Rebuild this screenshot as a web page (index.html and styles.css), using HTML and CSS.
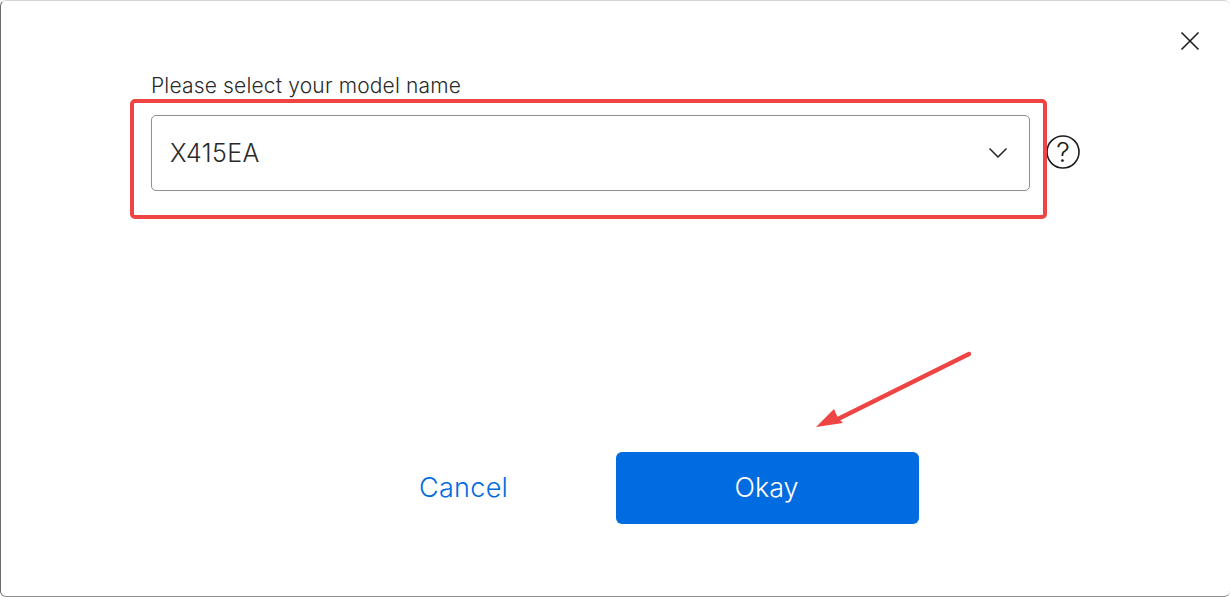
FILE: index.html
```html
<!DOCTYPE html>
<html lang="en">
<head>
<meta charset="utf-8">
<title>Select model</title>
<link rel="stylesheet" href="styles.css">
</head>
<body>
<div class="dialog">
  <div class="top">
    <button class="close" aria-label="Close">
      <svg width="20" height="20" viewBox="0 0 20 20"><path d="M1.5 1.5 18.5 18.5M18.5 1.5 1.5 18.5" fill="none" stroke="#1c1c1c" stroke-width="1.6"/></svg>
    </button>
  </div>
  <div class="form">
    <label class="label">Please select your model name</label>
    <div class="row">
      <div class="select">
        <span class="value">X415EA</span>
        <svg class="chev" width="20" height="12" viewBox="0 0 20 12"><path d="M1.5 1.5 10 10 18.5 1.5" fill="none" stroke="#222" stroke-width="1.5"/></svg>
      </div>
      <svg class="help" width="34" height="34" viewBox="0 0 34 34"><circle cx="17" cy="17" r="16" fill="none" stroke="#1c1c1c" stroke-width="1.6"/><text x="17" y="27" text-anchor="middle" class="q">?</text></svg>
    </div>
  </div>
  <div class="actions">
    <button class="cancel">Cancel</button>
    <button class="okay">Okay</button>
  </div>
  <div class="highlight"></div>
  <svg class="arrow" width="170" height="90" viewBox="0 0 170 90"><path d="M154 4 23 69" stroke="#ef4444" stroke-width="4.4" stroke-linecap="round" fill="none"/><path d="M1 77 19 59 23 68 28 73Z" fill="#ef4444"/></svg>
</div>
</body>
</html>
```
FILE: styles.css
```css
* { box-sizing: border-box; }
html, body { margin: 0; padding: 0; background: #fff; }
body { width: 1230px; height: 597px; overflow: hidden; font-family: "Inter", "Liberation Sans", sans-serif; }
.dialog {
  position: relative;
  width: 1230px;
  height: 597px;
  background: #fff;
  border-top: 1px solid #d4d4d4;
  border-left: 1px solid #6a6a6a;
  border-bottom: 1px solid #8c8c8c;
  border-radius: 6px;
  display: flex;
  flex-direction: column;
}
.top { display: flex; justify-content: flex-end; padding: 30px 30px 0 0; height: 73px; }
.close { background: none; border: 0; padding: 0; width: 20px; height: 20px; display: flex; }
.form { padding-left: 150px; }
.label { display: block; font-size: 21px; font-weight: 300; letter-spacing: 0.17px; line-height: 24px; color: #2a2a2a; margin-bottom: 17px; }
.row { display: flex; align-items: center; gap: 16px; }
.select {
  width: 879px;
  height: 76px;
  border: 1px solid #8f8f8f;
  border-radius: 5px;
  padding: 0 21px 0 18px;
  display: flex;
  align-items: center;
  justify-content: space-between;
}
.value { font-size: 25px; font-weight: 300; letter-spacing: 0.4px; color: #2a2a2a; }
.help { flex: none; margin-bottom: 2px; }
.q { font-size: 27px; font-weight: 300; fill: #1c1c1c; }
.actions { margin-top: 261px; padding-left: 615px; display: flex; align-items: center; }
.cancel { position: absolute; left: 418px; margin-top: -2px; background: none; border: 0; padding: 0; font: 300 27px "Inter", "Liberation Sans", sans-serif; letter-spacing: 0.3px; color: #006ce0; }
.okay { width: 303px; height: 72px; padding: 0 2px 2px 0; background: #006ce0; border: 0; border-radius: 6px; color: #fff; font: 300 27px "Inter", "Liberation Sans", sans-serif; }
.highlight { position: absolute; left: 129px; top: 98px; width: 917px; height: 120px; border: 4px solid #ef4444; border-radius: 5px; }
.arrow { position: absolute; left: 814px; top: 349px; }
```
